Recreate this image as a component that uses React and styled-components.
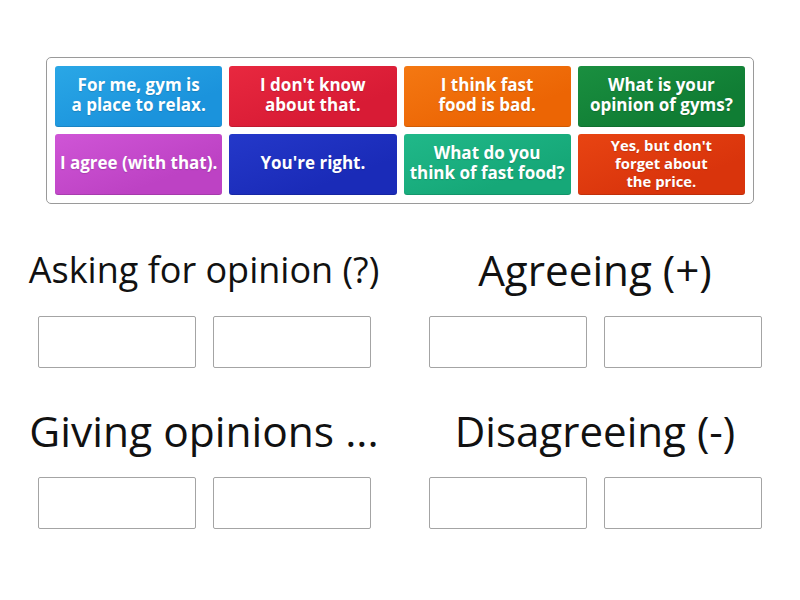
import React from 'react';
import styled, { createGlobalStyle } from 'styled-components';

const GlobalStyle = createGlobalStyle`
  html, body {
    margin: 0;
    padding: 0;
    background: #fff;
  }
  body {
    font-family: "Open Sans", "DejaVu Sans", sans-serif;
    color: #111;
  }
`;

const Page = styled.div`
  width: 800px;
  height: 600px;
  padding-top: 57px;
  box-sizing: border-box;
`;

const Bank = styled.div`
  margin-left: 46px;
  width: 708px;
  box-sizing: border-box;
  border: 1px solid #9a9a9a;
  border-radius: 5px;
  padding: 8px;
  display: grid;
  grid-template-columns: repeat(4, 1fr);
  grid-auto-rows: 61px;
  column-gap: 7px;
  row-gap: 7px;
`;

const Tile = styled.div`
  display: flex;
  align-items: center;
  justify-content: center;
  text-align: center;
  border-radius: 3px;
  color: #fff;
  font-weight: 700;
  font-size: ${(p) => (p.$small ? '14.8px' : '17px')};
  line-height: ${(p) => (p.$small ? '18px' : '20px')};
  padding: 0 2px 4px;
  background: linear-gradient(160deg, ${(p) => p.$light} 0%, ${(p) => p.$color} 70%);
  box-shadow: inset 0 -1px 0 rgba(0, 0, 0, 0.12);
  text-shadow: 0 1px 1px rgba(0, 0, 0, 0.15);
  white-space: pre-line;
`;

const Groups = styled.div`
  margin-top: 35px;
  margin-left: 8px;
  width: 784px;
  display: grid;
  grid-template-columns: 392px 390px;
  row-gap: 32px;
`;

const Group = styled.div`
  display: flex;
  flex-direction: column;
  align-items: center;
`;

const Heading = styled.div`
  height: 60px;
  display: flex;
  align-items: center;
  justify-content: center;
  font-size: ${(p) => p.$size}px;
  font-weight: 400;
  color: #111;
  white-space: nowrap;
`;

const Slots = styled.div`
  margin-top: 17px;
  display: flex;
  gap: 17px;
`;

const Slot = styled.div`
  width: 158px;
  height: 52px;
  box-sizing: border-box;
  border: 1px solid #a4a4a4;
  border-radius: 2px;
  background: #fff;
`;

const tiles = [
  { text: 'For me, gym is\na place to relax.', color: '#1b93dc', light: '#2aa7e6' },
  { text: "I don't know\nabout that.", color: '#d81b35', light: '#e8283f' },
  { text: 'I think fast\nfood is bad.', color: '#ec6504', light: '#f47812' },
  { text: 'What is your\nopinion of gyms?', color: '#107d34', light: '#1a8f40' },
  { text: 'I agree (with that).', color: '#bd42c4', light: '#cf55d6' },
  { text: "You're right.", color: '#1a2bb8', light: '#2438c9' },
  { text: 'What do you\nthink of fast food?', color: '#16a878', light: '#20b889' },
  { text: "Yes, but don't\nforget about\nthe price.", color: '#d9340c', light: '#e84412', small: true },
];

const groups = [
  { title: 'Asking for opinion (?)', size: 36 },
  { title: 'Agreeing (+)', size: 42.2 },
  { title: 'Giving opinions ...', size: 42.5 },
  { title: 'Disagreeing (-)', size: 42.1 },
];

export default function App() {
  return (
    <>
      <GlobalStyle />
      <Page>
        <Bank>
          {tiles.map((t) => (
            <Tile key={t.text} $color={t.color} $light={t.light} $small={t.small}>
              {t.text}
            </Tile>
          ))}
        </Bank>
        <Groups>
          {groups.map((g) => (
            <Group key={g.title}>
              <Heading $size={g.size}>{g.title}</Heading>
              <Slots>
                <Slot />
                <Slot />
              </Slots>
            </Group>
          ))}
        </Groups>
      </Page>
    </>
  );
}
